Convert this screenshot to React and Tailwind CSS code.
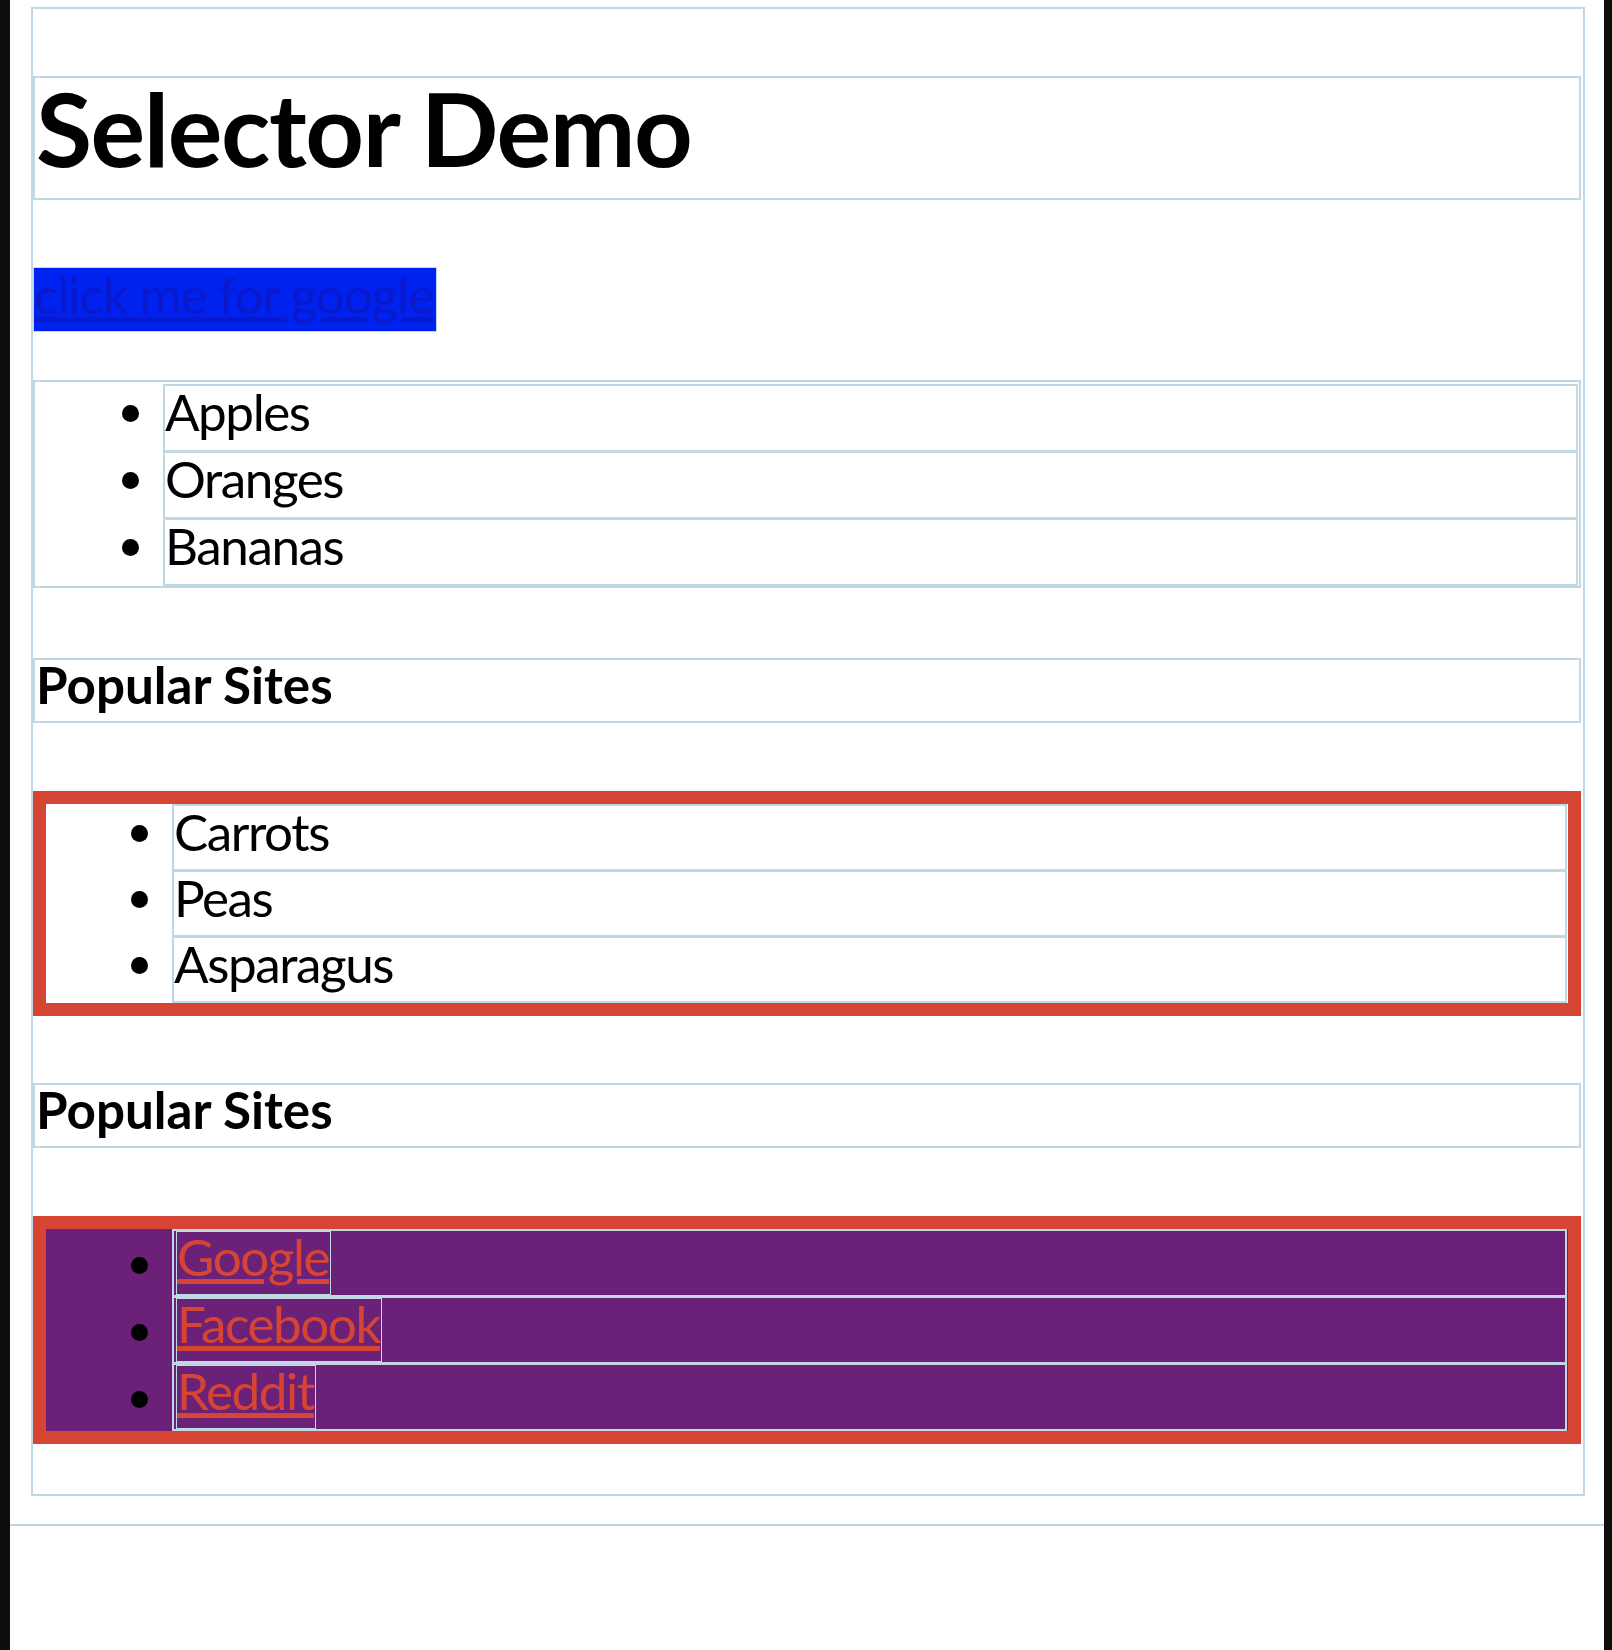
import React from "react";

const fruits = ["Apples", "Oranges", "Bananas"];
const veggies = ["Carrots", "Peas", "Asparagus"];
const sites = ["Google", "Facebook", "Reddit"];

export default function App() {
  return (
    <div
      className="flex min-h-[1650px] bg-[#0e0e0e] text-black"
      style={{ fontFamily: "Lato, 'Noto Sans', sans-serif" }}
    >
      <div className="ml-[10px] w-[1594px] bg-white">
        {/* body */}
        <div className="border-b-2 border-[#bfd8e3]">
          {/* container box */}
          <div className="mt-[7px] mb-[28px] ml-[21px] w-[1554px] border-2 border-[#bfd8e3] pr-[2px] pb-[50px]">
            <h1 className="mt-[67px] border-2 border-[#bfd8e3] pl-px pb-[20px] text-[102.4px] font-bold leading-[100px] tracking-[-0.014em]">
              Selector Demo
            </h1>

            <a
              href="#"
              className="mt-[67px] block w-fit border border-[#bfd8e3] bg-[#0022ee] pr-[2px] pb-[10px] text-[51.2px] leading-[53px] tracking-[-0.022em] text-[#0a19cc] underline"
            >
              click me for google
            </a>

            {/* plain list */}
            <ul className="mt-[48px] list-disc border-2 border-[#bfd8e3] pt-[2px] pl-[128px] pr-[1px] text-[51.2px] leading-[50px] tracking-[-0.028em]">
              {fruits.map((f) => (
                <li key={f} className="-mt-px border-2 border-[#bfd8e3] pb-[14px] first:mt-0">
                  {f}
                </li>
              ))}
            </ul>

            <h4 className="mt-[70px] border-2 border-[#bfd8e3] pl-px pb-[12px] text-[51.2px] font-bold leading-[49px]">
              Popular Sites
            </h4>

            {/* bordered list */}
            <ul className="mt-[68px] list-disc border-[13px] border-[#d64533] bg-white pl-[126px] pr-px text-[51.2px] leading-[50px] tracking-[-0.028em]">
              {veggies.map((v) => (
                <li key={v} className="-mt-px border-2 border-[#bfd8e3] pb-[13px] first:mt-0">
                  {v}
                </li>
              ))}
            </ul>

            <h4 className="mt-[67px] border-2 border-[#bfd8e3] pl-px pb-[12px] text-[51.2px] font-bold leading-[49px]">
              Popular Sites
            </h4>

            {/* purple link list */}
            <ul className="mt-[68px] list-disc border-[13px] border-[#d64533] bg-[#6b2178] pl-[126px] pr-px text-[51.2px] leading-[64px] tracking-[-0.028em]">
              {sites.map((s) => (
                <li key={s} className="-mt-px border-2 border-[#bfd8e3] pl-[2px] first:mt-0">
                  <a
                    href="#"
                    className="inline-block border border-[#bfd8e3] pr-px pb-[13px] align-top leading-[49px] text-[#d64533] underline"
                  >
                    {s}
                  </a>
                </li>
              ))}
            </ul>
          </div>
        </div>
      </div>
    </div>
  );
}
